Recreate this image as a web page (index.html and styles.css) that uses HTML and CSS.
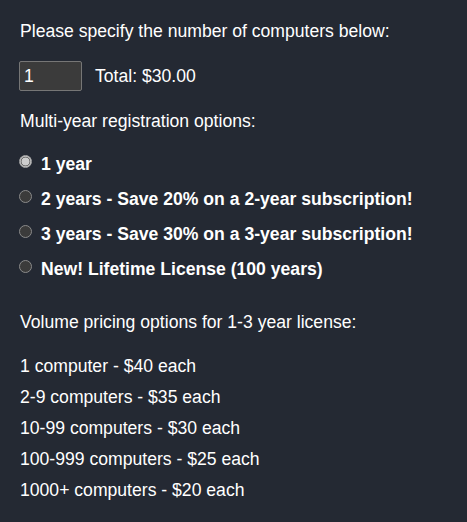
FILE: index.html
```html
<!DOCTYPE html>
<html>
<head>
<meta charset="utf-8">
<link rel="stylesheet" href="styles.css">
</head>
<body>
<div class="page">
  <p class="line first">Please specify the number of computers below:</p>
  <div class="qty-row">
    <div class="qty-input">1</div>
    <span class="total">Total: $30.00</span>
  </div>
  <p class="line multi">Multi-year registration options:</p>
  <div class="options">
    <div class="option"><span class="radio checked"></span><span class="opt-label">1 year</span></div>
    <div class="option"><span class="radio"></span><span class="opt-label">2 years - Save 20% on a 2-year subscription!</span></div>
    <div class="option"><span class="radio"></span><span class="opt-label">3 years - Save 30% on a 3-year subscription!</span></div>
    <div class="option"><span class="radio"></span><span class="opt-label">New! Lifetime License (100 years)</span></div>
  </div>
  <p class="line volume">Volume pricing options for 1-3 year license:</p>
  <ul class="prices">
    <li>1 computer - $40 each</li>
    <li>2-9 computers - $35 each</li>
    <li>10-99 computers - $30 each</li>
    <li>100-999 computers - $25 each</li>
    <li>1000+ computers - $20 each</li>
  </ul>
</div>
</body>
</html>
```

FILE: styles.css
```css
html, body {
  margin: 0;
  padding: 0;
  background: #242933;
}
body {
  font-family: "Liberation Sans", Arial, sans-serif;
  font-size: 17.6px;
  color: #ffffff;
}
.page {
  padding: 21px 20px 0 20px;
  display: flex;
  flex-direction: column;
}
.line {
  margin: 0;
  line-height: 20px;
  height: 20px;
}
.qty-row {
  margin-top: 20px;
  display: flex;
  align-items: center;
  height: 30px;
}
.qty-input {
  box-sizing: border-box;
  width: 63px;
  height: 30px;
  margin-left: -1px;
  background: #3b3b3b;
  border: 1px solid #767676;
  border-radius: 2px;
  padding: 0 4px;
  line-height: 28px;
  color: #ffffff;
}
.total {
  margin-left: 13px;
}
.multi {
  margin-top: 20px;
}
.options {
  margin-top: 23px;
  display: flex;
  flex-direction: column;
  gap: 15px;
}
.option {
  display: flex;
  align-items: center;
  height: 20px;
  font-weight: bold;
}
.radio {
  flex: none;
  box-sizing: border-box;
  width: 13px;
  height: 13px;
  border-radius: 50%;
  border: 1px solid #8a8a8a;
  background: #3b3b3b;
  margin-left: -1px;
  margin-right: 9px;
  position: relative;
  top: -3px;
}
.radio.checked {
  border: 1px solid #a8a8a8;
  background: radial-gradient(circle, #cdcdcd 0 3.6px, #707070 4.2px, #707070 4.6px, #bdbdbd 5.1px);
}
.volume {
  margin-top: 33px;
}
.prices {
  list-style: none;
  margin: 19px 0 0 0;
  padding: 0;
}
.prices li {
  line-height: 31px;
  height: 31px;
}
```
